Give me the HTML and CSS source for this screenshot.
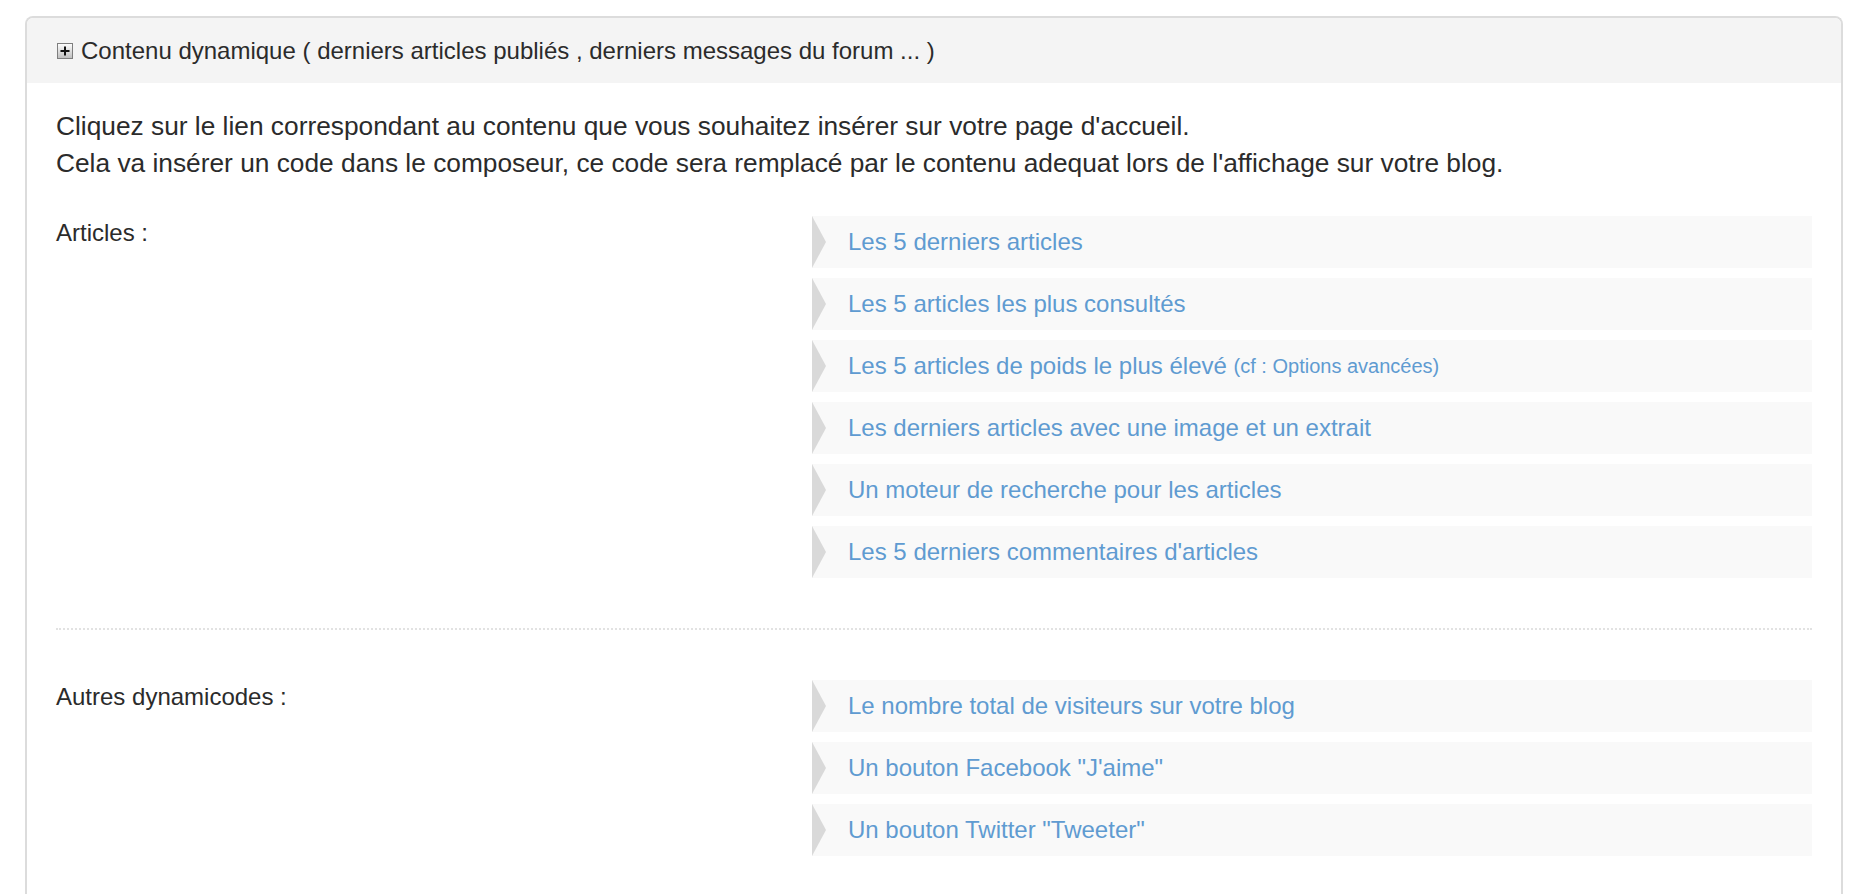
FILE: index.html
```html
<!DOCTYPE html>
<html lang="fr">
<head>
<meta charset="UTF-8" />
<title>Contenu dynamique</title>
<link rel="stylesheet" href="styles.css">
</head>
<body>
<div class="panel">
  <div class="panel-heading">
    <!-- expand toggle -->
    <svg class="toggle" width="16" height="16" viewBox="0 0 16 16">
      <defs>
        <linearGradient id="tg" x1="0" y1="0" x2="0" y2="1">
          <stop offset="0" stop-color="#ffffff"/>
          <stop offset="1" stop-color="#bdbdbd"/>
        </linearGradient>
      </defs>
      <rect x="0.5" y="0.5" width="15" height="15" fill="url(#tg)" stroke="#7e7e7e"/>
      <path d="M3.5 8h9M8 3.5v9" stroke="#111" stroke-width="2"/>
    </svg>
    <span>Contenu dynamique ( derniers articles publiés , derniers messages du forum ... )</span>
  </div>
  <div class="panel-body">
    <p class="intro">Cliquez sur le lien correspondant au contenu que vous souhaitez insérer sur votre page d'accueil.<br>
    Cela va insérer un code dans le composeur, ce code sera remplacé par le contenu adequat lors de l'affichage sur votre blog.</p>

    <div class="dyn-group">
      <div class="dyn-label">Articles :</div>
      <ul class="dyn-list">
        <li><a href="#">Les 5 derniers articles</a></li>
        <li><a href="#">Les 5 articles les plus consultés</a></li>
        <li><a href="#">Les 5 articles de poids le plus élevé</a>&nbsp;<small>(cf : Options avancées)</small></li>
        <li><a href="#">Les derniers articles avec une image et un extrait</a></li>
        <li><a href="#">Un moteur de recherche pour les articles</a></li>
        <li><a href="#">Les 5 derniers commentaires d'articles</a></li>
      </ul>
    </div>

    <hr class="sep">

    <div class="dyn-group">
      <div class="dyn-label">Autres dynamicodes :</div>
      <ul class="dyn-list">
        <li><a href="#">Le nombre total de visiteurs sur votre blog</a></li>
        <li><a href="#">Un bouton Facebook "J'aime"</a></li>
        <li><a href="#">Un bouton Twitter "Tweeter"</a></li>
      </ul>
    </div>
  </div>
</div>
</body>
</html>
```

FILE: styles.css
```css
body {
  margin: 16px 17px 0 25px;
  background: #fff;
  color: #333;
  font-family: "Liberation Sans", Arial, sans-serif;
}
.panel {
  border: 2px solid #dcdcdc;
  border-bottom: none;
  border-radius: 8px 8px 0 0;
}
.panel-heading {
  display: flex;
  align-items: center;
  gap: 8px;
  height: 65px;
  padding-left: 30px;
  background: #f4f4f4;
  border-radius: 6px 6px 0 0;
  font-size: 24px;
  color: #2b2b2b;
}
.toggle {
  flex: none;
}
.panel-body {
  padding: 25px 29px 60px;
}
.intro {
  margin: 0 0 34px;
  font-size: 26.3px;
  line-height: 37px;
  color: #2b2b2b;
}
.dyn-group {
  display: grid;
  grid-template-columns: 756px 1fr;
}
.dyn-label {
  font-size: 24px;
  line-height: 34px;
  color: #2b2b2b;
}
.dyn-list {
  list-style: none;
  margin: 0;
  padding: 0;
  display: flex;
  flex-direction: column;
  gap: 10px;
}
.dyn-list li {
  display: flex;
  align-items: center;
  height: 52px;
  background: #f9f9f9;
  font-size: 24px;
  color: #5f9bd1;
}
/* grey arrow on the left of each row */
.dyn-list li::before {
  content: "";
  flex: none;
  border-left: 14px solid #d9d9d9;
  border-top: 26px solid transparent;
  border-bottom: 26px solid transparent;
  margin-right: 22px;
}
.dyn-list a {
  color: #5f9bd1;
  text-decoration: none;
}
.dyn-list small {
  font-size: 20px;
}
.sep {
  border: 0;
  border-top: 2px dotted #e2e2e2;
  margin: 50px 0;
}
```
